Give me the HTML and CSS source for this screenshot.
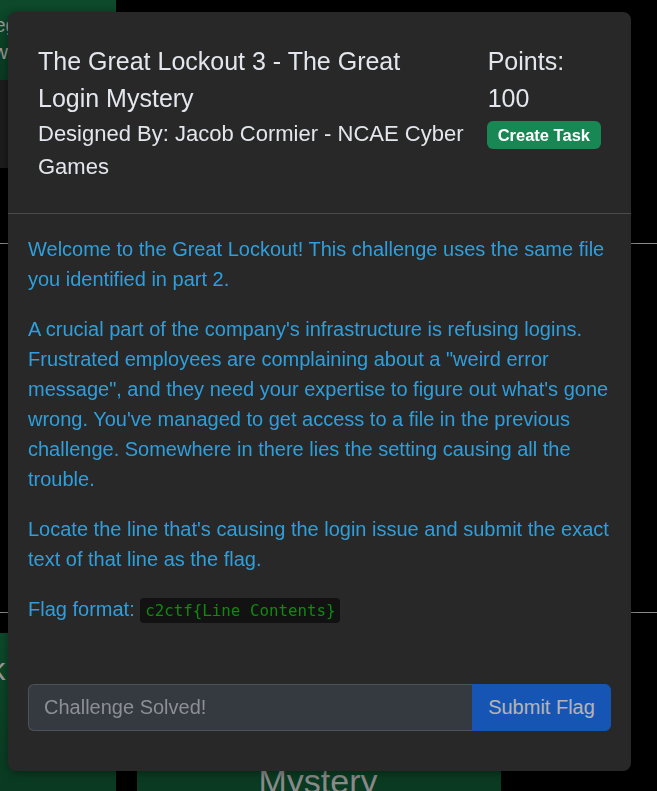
FILE: index.html
```html
<!DOCTYPE html>
<html lang="en">
<head>
<meta charset="utf-8">
<title>The Great Lockout 3</title>
<link rel="stylesheet" href="styles.css">
</head>
<body>
<div class="page">
  <div class="row-top">
    <div class="card card-green card-top">
      <span class="ghost ghost-a">Reg</span>
      <span class="ghost ghost-b">Show</span>
    </div>
  </div>
  <div class="card-dark"></div>
  <hr class="rule rule-1">
  <hr class="rule rule-2">
  <div class="row-bottom">
    <div class="card card-green card-left">
      <span class="ghost ghost-k">Lock</span>
      <span class="ghost ghost-colon">Pts:</span>
    </div>
    <div class="card card-green card-mid">
      <span class="mid-title">Mystery</span>
    </div>
  </div>
</div>

<div class="modal">
  <div class="modal-header">
    <div class="head-left">
      <h2 class="title">The Great Lockout 3 - The Great Login Mystery</h2>
      <div class="byline">Designed By: Jacob Cormier - NCAE Cyber Games</div>
    </div>
    <div class="head-right">
      <div class="points">Points:<br>100</div>
      <span class="badge">Create Task</span>
    </div>
  </div>
  <div class="modal-body">
    <p>Welcome to the Great Lockout! This challenge uses the same file you identified in part 2.</p>
    <p>A crucial part of the company's infrastructure is refusing logins. Frustrated employees are complaining about a "weird error message", and they need your expertise to figure out what's gone wrong. You've managed to get access to a file in the previous challenge. Somewhere in there lies the setting causing all the trouble.</p>
    <p>Locate the line that's causing the login issue and submit the exact text of that line as the flag.</p>
    <p class="last">Flag format: <code>c2ctf{Line Contents}</code></p>
    <form class="flag-form">
      <input class="flag-input" type="text" value="Challenge Solved!" disabled>
      <button class="flag-btn" type="button" disabled>Submit Flag</button>
    </form>
  </div>
</div>
</body>
</html>
```

FILE: styles.css
```css
html, body {
  margin: 0;
  padding: 0;
  background: #000;
  height: 100%;
  overflow: hidden;
  font-family: "Liberation Sans", Arial, sans-serif;
}

.page {
  display: flex;
  flex-direction: column;
  height: 791px;
}

.row-top {
  display: flex;
}

.card {
  overflow: hidden;
  color: #8d8d8d;
}

.card-green {
  background: linear-gradient(180deg, #0d4a2b 0%, #0a3a21 100%);
}

.card-top {
  width: 116px;
  height: 80px;
  display: flex;
  flex-direction: column;
}

.ghost {
  font-size: 20px;
  line-height: 27px;
  white-space: nowrap;
  color: #9a9a9a;
}

.ghost-a {
  margin: 12px 0 0 -20px;
}

.ghost-b {
  margin-left: -42px;
}

.card-dark {
  width: 116px;
  height: 88px;
  background: #1c1c1c;
}

.rule {
  border: 0;
  height: 1px;
  background: #8a8a8a;
  margin: 0;
}

.rule-1 {
  margin-top: 75px;
}

.rule-2 {
  margin-top: 368px;
}

.row-bottom {
  display: flex;
  gap: 21px;
  margin-top: 20px;
  flex: 1;
}

.card-left {
  width: 116px;
  display: flex;
  flex-direction: column;
}

.ghost-k {
  font-size: 32px;
  line-height: 36px;
  margin: 18px 0 0 -62px;
}

.ghost-colon {
  font-size: 24px;
  line-height: 30px;
  margin: 20px 0 0 -40px;
}

.card-mid {
  width: 364px;
  display: flex;
  justify-content: center;
  align-items: flex-end;
}

.mid-title {
  font-size: 34px;
  line-height: 40px;
  color: #8a8a8a;
  margin-bottom: -10px;
  margin-left: -2px;
}

/* Modal */
.modal {
  position: fixed;
  left: 8px;
  top: 12px;
  width: 623px;
  background: #282828;
  border-radius: 8px;
  box-shadow: 0 2px 10px rgba(0, 0, 0, 0.4);
}

.modal-header {
  display: flex;
  padding: 31px 30px 30px 30px;
  border-bottom: 1px solid #4b4b4b;
  color: #e3e7ed;
}

.head-left {
  width: 427px;
  margin-right: 23px;
}

.title {
  margin: 0;
  font-size: 25px;
  line-height: 37px;
  font-weight: normal;
}

.byline {
  font-size: 22px;
  line-height: 33px;
}

.head-right {
  display: flex;
  flex-direction: column;
  align-items: flex-start;
}

.points {
  font-size: 25px;
  line-height: 37px;
}

.badge {
  margin-top: 4px;
  margin-left: -1px;
  height: 28px;
  line-height: 28px;
  padding: 0 11px;
  background: #198754;
  color: #fff;
  font-weight: bold;
  font-size: 16.5px;
  border-radius: 6px;
  white-space: nowrap;
}

.modal-body {
  padding: 20px 20px 40px 20px;
  color: #2f9fdc;
  font-size: 20px;
  line-height: 30px;
}

.modal-body p {
  margin: 0 0 20px 0;
}

.modal-body p.last {
  margin-bottom: 0;
  height: 30px;
}

code {
  font-family: "DejaVu Sans Mono", "Liberation Mono", monospace;
  font-size: 15.8px;
  line-height: 18px;
  color: #0f8a0f;
  background: #121212;
  border-radius: 4px;
  padding: 3px 5px;
}

.flag-form {
  display: flex;
  margin: 60px 0 0 0;
  height: 47px;
}

.flag-input {
  flex: 1;
  min-width: 0;
  box-sizing: border-box;
  height: 47px;
  margin: 0;
  padding: 0 15px;
  font-family: "Liberation Sans", Arial, sans-serif;
  font-size: 20px;
  color: #8c9096;
  background: #343a40;
  border: 1px solid #4d535a;
  border-right: 0;
  border-radius: 6px 0 0 6px;
  outline: none;
}

.flag-btn {
  width: 139px;
  height: 47px;
  margin: 0;
  padding: 0 8px;
  box-sizing: border-box;
  white-space: nowrap;
  font-family: "Liberation Sans", Arial, sans-serif;
  font-size: 20px;
  color: #fff;
  background: #0d6efd;
  border: 1px solid #0d6efd;
  border-radius: 0 6px 6px 0;
  opacity: 0.65;
}
```
